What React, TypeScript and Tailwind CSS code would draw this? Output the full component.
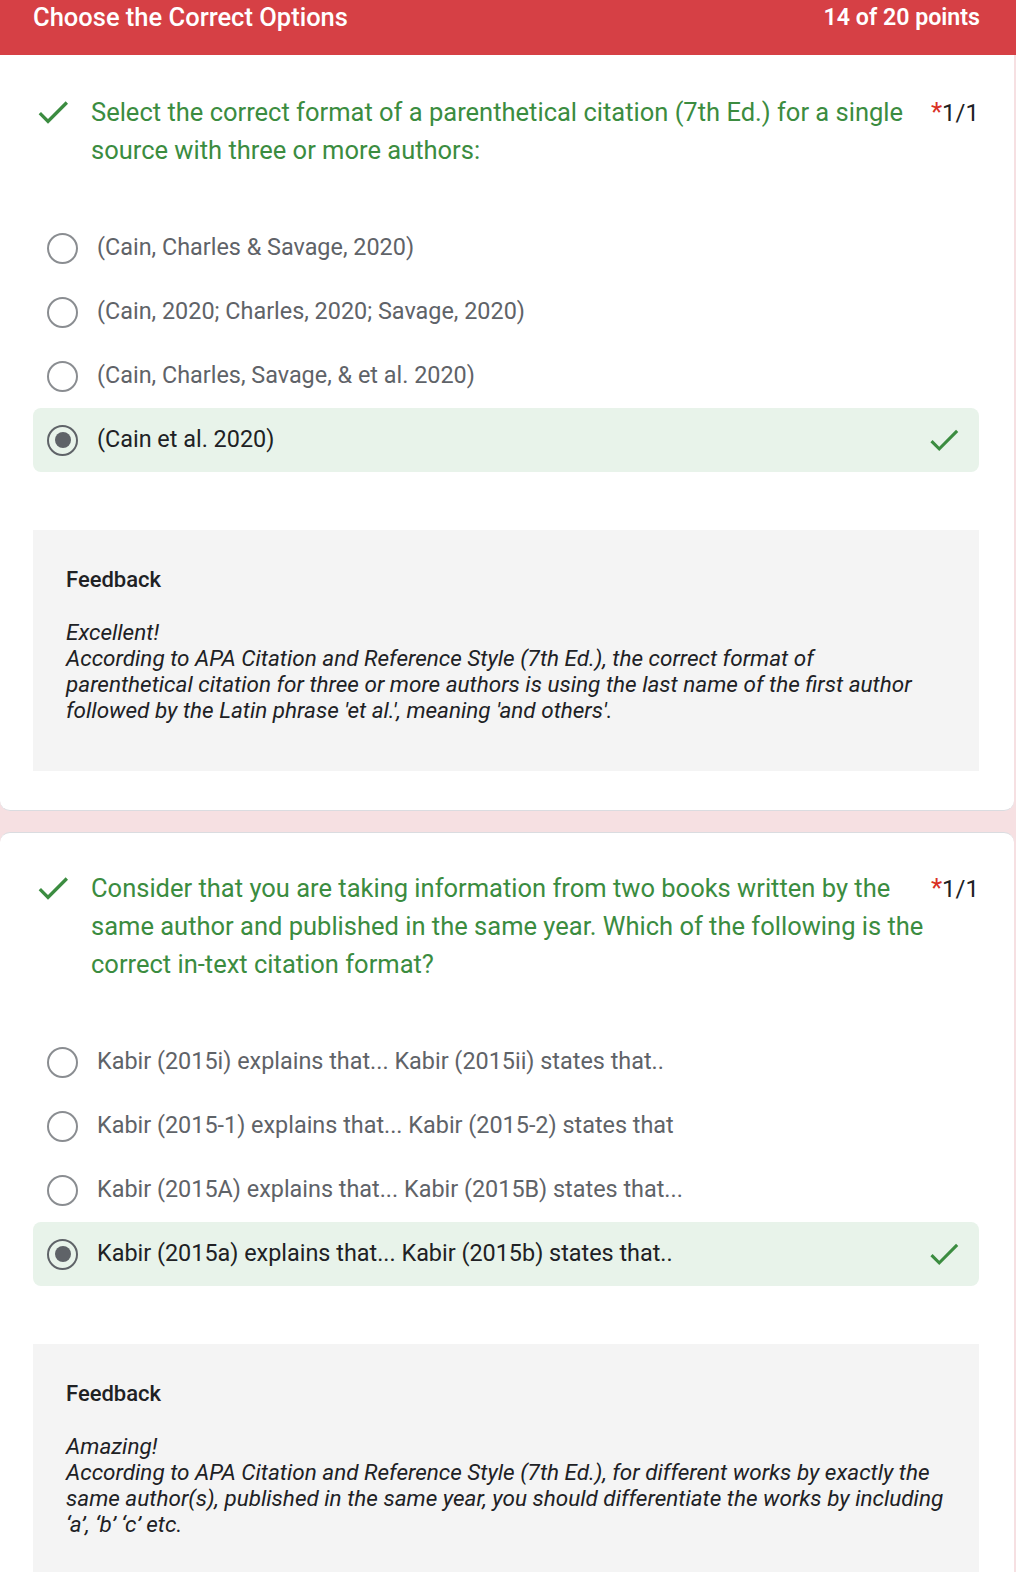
import React from 'react';

type Question = {
    title: string;
    options: string[];
    selected: number;
    heading: string;
    feedback: string[];
};

const questions: Question[] = [
    {
        title: 'Select the correct format of a parenthetical citation (7th Ed.) for a single source with three or more authors:',
        options: [
            '(Cain, Charles & Savage, 2020)',
            '(Cain, 2020; Charles, 2020; Savage, 2020)',
            '(Cain, Charles, Savage, & et al. 2020)',
            '(Cain et al. 2020)',
        ],
        selected: 3,
        heading: 'Excellent!',
        feedback: [
            'According to APA Citation and Reference Style (7th Ed.), the correct format of',
            'parenthetical citation for three or more authors is using the last name of the first author',
            "followed by the Latin phrase 'et al.', meaning 'and others'.",
        ],
    },
    {
        title: 'Consider that you are taking information from two books written by the same author and published in the same year. Which of the following is the correct in-text citation format?',
        options: [
            'Kabir (2015i) explains that... Kabir (2015ii) states that..',
            'Kabir (2015-1) explains that... Kabir (2015-2) states that',
            'Kabir (2015A) explains that... Kabir (2015B) states that...',
            'Kabir (2015a) explains that... Kabir (2015b) states that..',
        ],
        selected: 3,
        heading: 'Amazing!',
        feedback: [
            'According to APA Citation and Reference Style (7th Ed.), for different works by exactly the',
            'same author(s), published in the same year, you should differentiate the works by including',
            '\u2018a\u2019, \u2018b\u2019 \u2018c\u2019 etc.',
        ],
    },
];

function Check({ size = 40 }: { size?: number }) {
    return (
        <svg width={size} height={size} viewBox="0 0 24 24" fill="#3b8c40">
            <path d="M9 16.2L4.8 12l-1.4 1.4L9 19 21 7l-1.4-1.4L9 16.2z" />
        </svg>
    );
}

function Radio({ checked }: { checked: boolean }) {
    return (
        <span
            className={`flex items-center justify-center w-[31px] h-[31px] rounded-full border-[2.5px] ${
                checked ? 'border-[#5f6368]' : 'border-[#8a8d91]'
            }`}
        >
            {checked && <span className="w-[16px] h-[16px] rounded-full bg-[#5f6368]" />}
        </span>
    );
}

function QuestionCard({ q, first }: { q: Question; first: boolean }) {
    return (
        <div
            className={`bg-white w-[1014px] pl-[33px] pr-[35px] pb-[39px] border-[#dadce0] ${
                first ? 'pt-[38px] rounded-b-[10px] border-b' : 'pt-[36px] rounded-t-[10px] border-t'
            }`}
        >
            {/* question title */}
            <div className="flex items-start">
                <div className="w-[58px] shrink-0 -mt-[1px]">
                    <Check />
                </div>
                <p className="flex-1 text-[25.5px] leading-[38px] text-[#3b8c40] pr-[4px]">{q.title}</p>
                <span className="text-[24px] leading-[38px] text-[#202124] whitespace-nowrap">
                    <span className="text-[#d93025] text-[26px]">*</span>1/1
                </span>
            </div>

            {/* options */}
            <div className="mt-[47px]">
                {q.options.map((opt, i) => {
                    const sel = i === q.selected;
                    return (
                        <div
                            key={opt}
                            className={`flex items-center h-[64px] pl-[14px] pr-[16px] rounded-[8px] ${sel ? 'bg-[#e8f3ea]' : ''}`}
                        >
                            <Radio checked={sel} />
                            <span className={`ml-[19px] flex-1 text-[23.4px] ${sel ? 'text-[#202124]' : 'text-[#5f6368]'}`}>
                                {opt}
                            </span>
                            {sel && <Check size={38} />}
                        </div>
                    );
                })}
            </div>

            {/* feedback */}
            <div className="mt-[58px] bg-[#f4f4f4] pl-[33px] pr-[20px] pt-[36px] pb-[48px] text-[#202124]">
                <h3 className="text-[22px] leading-[28px] font-medium">Feedback</h3>
                <div className="mt-[25px] italic text-[22.5px] leading-[26px]">
                    <p>{q.heading}</p>
                    {q.feedback.map((l) => (
                        <p key={l}>{l}</p>
                    ))}
                </div>
            </div>
        </div>
    );
}

export default function App() {
    return (
        <div className="h-[1572px] bg-[#f6e0e2] font-['Roboto','Liberation_Sans',sans-serif] overflow-hidden">
            <div className="bg-[#d64045] h-[55px] flex items-start justify-between pl-[33px] pr-[36px] text-white">
                <span className="text-[25.5px] leading-[34px] font-medium">Choose the Correct Options</span>
                <span className="text-[23.2px] leading-[34px] font-semibold">14 of 20 points</span>
            </div>
            <QuestionCard q={questions[0]} first />
            <div className="h-[21px]" />
            <QuestionCard q={questions[1]} first={false} />
        </div>
    );
}
